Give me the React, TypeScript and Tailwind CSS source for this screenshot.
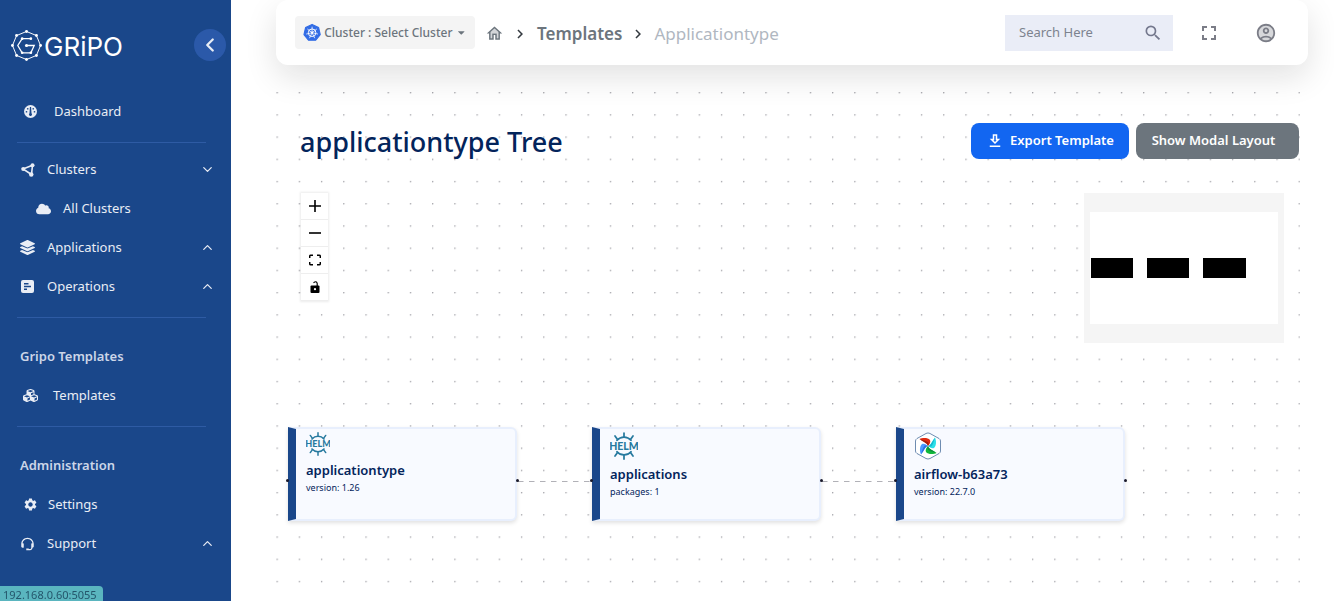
import type { ReactNode } from "react";
import { FaCloud, FaCubes, FaLayerGroup, FaCaretDown } from "react-icons/fa";
import { MdChevronRight, MdFullscreen, MdSearch, MdSettings } from "react-icons/md";
import { BiSupport } from "react-icons/bi";
import { ChevronDown, ChevronLeft, ChevronUp } from "lucide-react";

const polar = (cx: number, cy: number, r: number, deg: number) => {
  const a = (deg * Math.PI) / 180;
  return [cx + r * Math.sin(a), cy - r * Math.cos(a)] as const;
};

const ring = (n: number) => Array.from({ length: n }, (_, i) => (i * 360) / n);

function LogoMark() {
  const outer = ring(8).map((d) => polar(16, 16, 14.5, d));
  return (
    <svg width="31" height="33" viewBox="0 0 32 32" fill="none" stroke="white" aria-hidden="true">
      <polygon points={outer.map((p) => p.join(",")).join(" ")} strokeWidth="1" />
      {outer.map(([x, y], i) => (
        <circle key={i} cx={x} cy={y} r="1.5" fill="white" stroke="none" />
      ))}
      <path d="M20.500 9h-9L7 16l4.500 7.500h9l3.500-7.500h-8" strokeWidth="1.300" />
      <g fill="white" stroke="none">
        <circle cx="11.500" cy="9" r="1.400" />
        <circle cx="20.500" cy="9" r="1.400" />
        <circle cx="11.500" cy="23.500" r="1.400" />
        <circle cx="20.500" cy="23.500" r="1.400" />
        <circle cx="16" cy="16" r="1.600" />
      </g>
    </svg>
  );
}

function GaugeIcon() {
  return (
    <svg width="13" height="13" viewBox="0 0 26 26" aria-hidden="true">
      <circle cx="13" cy="13" r="13" fill="currentColor" />
      <g fill="#1a478a">
        <path d="M11.800 4h2.400l.8 12.500a3 3 0 1 1-4 0z" />
        <circle cx="7.500" cy="7.500" r="1.700" />
        <circle cx="18.500" cy="7.500" r="1.700" />
        <circle cx="5" cy="13.500" r="1.700" />
        <circle cx="21" cy="13.500" r="1.700" />
      </g>
    </svg>
  );
}

function NodesIcon() {
  return (
    <svg width="14" height="14" viewBox="0 0 28 28" aria-hidden="true">
      <path d="M4 12L23 4.500L21 23z" fill="none" stroke="currentColor" strokeWidth="3.200" />
      <circle cx="4.500" cy="12" r="4" fill="currentColor" />
      <circle cx="23" cy="4.500" r="4" fill="currentColor" />
      <circle cx="20.500" cy="23" r="4.500" fill="currentColor" />
    </svg>
  );
}

function BoardIcon() {
  return (
    <svg width="13" height="13" viewBox="0 0 26 26" aria-hidden="true">
      <rect width="26" height="26" rx="4" fill="currentColor" />
      <path d="M6 7.500h9M6 13h14M6 18.500h6" stroke="#1a478a" strokeWidth="2.800" />
    </svg>
  );
}

function KubernetesIcon() {
  const hept = ring(7).map((d) => polar(12, 12.3, 11, d).join(",")).join(" ");
  return (
    <svg width="19" height="19" viewBox="0 0 24 24" aria-hidden="true">
      <polygon points={hept} fill="#326ce5" stroke="#326ce5" strokeWidth="1.500" strokeLinejoin="round" />
      <g stroke="white" fill="none">
        <circle cx="12" cy="12.300" r="5" strokeWidth="1.300" />
        {ring(7).map((d) => {
          const [x, y] = polar(12, 12.3, 8, d);
          return <line key={d} x1="12" y1="12.300" x2={x} y2={y} strokeWidth="1" />;
        })}
      </g>
      <circle cx="12" cy="12.300" r="1.500" fill="white" />
    </svg>
  );
}

function HomeIcon() {
  return (
    <svg width="17" height="17" viewBox="1 2 22 20" fill="#6c757d" aria-hidden="true">
      <path opacity=".3" d="M7 10.190V18h2v-6h6v6h2v-7.810l-5-4.500z" />
      <path d="M12 3L2 12h3v8h6v-6h2v6h6v-8h3L12 3zm5 15h-2v-6H9v6H7v-7.810l5-4.500 5 4.500V18z" />
    </svg>
  );
}

function AccountIcon() {
  return (
    <svg width="22" height="22" viewBox="0 0 24 24" fill="#7b7d87" aria-hidden="true">
      <circle cx="12" cy="12" r="9" opacity=".3" />
      <path d="M12 2C6.480 2 2 6.480 2 12s4.480 10 10 10 10-4.480 10-10S17.520 2 12 2zM7.350 18.500C8.660 17.560 10.260 17 12 17s3.340.56 4.650 1.500c-1.310.94-2.910 1.500-4.650 1.500s-3.340-.56-4.650-1.500zm10.790-1.380C16.450 15.800 14.320 15 12 15s-4.450.8-6.140 2.120C4.700 15.730 4 13.950 4 12c0-4.420 3.580-8 8-8s8 3.580 8 8c0 1.950-.7 3.730-1.860 5.120zM12 6c-1.930 0-3.500 1.570-3.500 3.500S10.070 13 12 13s3.500-1.570 3.500-3.500S13.930 6 12 6zm0 5c-.83 0-1.500-.67-1.500-1.500S11.170 8 12 8s1.500.67 1.500 1.500S12.830 11 12 11z" />
    </svg>
  );
}

function DownloadIcon() {
  return (
    <svg width="18" height="18" viewBox="0 0 24 24" aria-hidden="true">
      <path
        fill="currentColor"
        d="M19 9h-4V3H9v6H5l7 7 7-7zm-8 2V5h2v6h1.170L12 13.170 9.830 11H11zm-6 7h14v2H5z"
      />
    </svg>
  );
}

function HelmIcon({ size }: { size: number }) {
  return (
    <svg width={size} height={size} viewBox="0 0 56 56" fill="none" stroke="#277a9f" strokeWidth="3.500" strokeLinecap="round" aria-hidden="true">
      <path d="M14 16.500a18.500 18.500 0 0 1 28 0M14 39.500a18.500 18.500 0 0 0 28 0" />
      <path d="M28 10V2M15 15L10 8M41 15l5-7M28 46v8M15 41l-5 7M41 41l5 7" />
      <text
        x="28"
        y="35"
        textAnchor="middle"
        fontFamily="Lato, sans-serif"
        fontWeight="900"
        fontSize="21"
        fill="#277a9f"
        stroke="none"
      >
        HELM
      </text>
    </svg>
  );
}

function AirflowIcon() {
  const blade = "M28 28C27 23 21 21 11 14C17 11 28 11 32 16C34 20 31 25 28 28z";
  const fold = "M28 28C27 23 21 21 11 14C17 16 27 18 29 22C29.500 24 29 26 28 28z";
  return (
    <svg width="28" height="28" viewBox="0 0 56 56" aria-hidden="true">
      <path d="M28 2Q30 2 32 3L50 13Q53 15 53 18V38Q53 41 50 43L32 53Q28 55 24 53L6 43Q3 41 3 38V18Q3 15 6 13L24 3Q26 2 28 2z" fill="white" stroke="#5d7fa8" strokeWidth="1.800" />
      <path d={blade} fill="#e0290f" />
      <path d={blade} fill="#2be0e8" transform="rotate(90 28 28)" />
      <path d={blade} fill="#10b83c" transform="rotate(180 28 28)" />
      <path d={blade} fill="#4b9bff" transform="rotate(270 28 28)" />
      <path d={fold} fill="#a3200f" />
      <path d={fold} fill="#16b9cf" transform="rotate(90 28 28)" />
      <path d={fold} fill="#0b8f3c" transform="rotate(180 28 28)" />
      <path d={fold} fill="#2f6fe0" transform="rotate(270 28 28)" />
    </svg>
  );
}

function Divider() {
  return <hr className="mt-[11px] mr-[25px] mb-[7px] ml-[17px] border-[#2e5ba4]" />;
}

function NavRow({
  icon,
  label,
  pad = "pl-5",
  gap = "gap-3",
  chevron,
}: {
  icon: ReactNode;
  label: string;
  pad?: string;
  gap?: string;
  chevron?: "up" | "down";
}) {
  return (
    <a href="#" className={`flex h-[39px] items-center pr-4 text-[13px] text-[#e9edf5] ${pad} ${gap}`}>
      <span className="flex w-[15px] shrink-0 justify-center">{icon}</span>
      <span className="flex-1">{label}</span>
      {chevron === "down" && <ChevronDown size={15} />}
      {chevron === "up" && <ChevronUp size={15} />}
    </a>
  );
}

function SectionTitle({ children }: { children: ReactNode }) {
  return (
    <h2 className="mt-[19px] flex h-[39px] items-center pl-5 text-[13px] font-semibold text-[#ccd6e8]">{children}</h2>
  );
}

function Sidebar() {
  return (
    <aside className="flex w-[231px] shrink-0 flex-col bg-[#1a478a]">
      <div className="flex h-[92px] items-center pr-[5px] pb-0.5 pl-[11px]">
        <LogoMark />
        <span className="ml-0.5 flex-1 pt-0.5 font-['Inter'] text-[26px] font-normal text-white">GRiPO</span>
        <button
          type="button"
          aria-label="Collapse sidebar"
          className="flex size-8 items-center justify-center rounded-full bg-[#2b59a9] text-[#e9edf5]"
        >
          <ChevronLeft size={22} strokeWidth={2.5} />
        </button>
      </div>
      <nav>
        <NavRow icon={<GaugeIcon />} label="Dashboard" pad="pl-[23px]" gap="gap-4" />
        <Divider />
        <NavRow icon={<NodesIcon />} label="Clusters" chevron="down" />
        <NavRow icon={<FaCloud size={16} />} label="All Clusters" pad="pl-9" />
        <NavRow icon={<FaLayerGroup size={15} />} label="Applications" chevron="up" />
        <NavRow icon={<BoardIcon />} label="Operations" chevron="up" />
        <Divider />
        <SectionTitle>Gripo Templates</SectionTitle>
        <NavRow icon={<FaCubes size={15} />} label="Templates" pad="pl-[23px]" gap="gap-[15px]" />
        <Divider />
        <SectionTitle>Administration</SectionTitle>
        <NavRow icon={<MdSettings size={15} />} label="Settings" pad="pl-[23px]" gap="gap-2.5" />
        <NavRow icon={<BiSupport size={16} />} label="Support" chevron="up" />
      </nav>
    </aside>
  );
}

function Header() {
  return (
    <header className="relative z-10 flex h-[65px] items-center rounded-xl bg-white pr-[31px] pl-[19px] text-[#6c757d] shadow-[0_12px_32px_rgba(18,18,18,0.12)]">
      <button
        type="button"
        className="flex h-[33px] w-[180px] items-center rounded bg-[#f4f4f4] px-2 text-xs font-medium whitespace-nowrap"
      >
        <KubernetesIcon />
        <span className="mr-1 ml-[3px]">Cluster : Select Cluster</span>
        <FaCaretDown size={11} />
      </button>
      <nav aria-label="Breadcrumb" className="ml-[11px] flex items-center pt-0.5">
        <a href="#" aria-label="Home">
          <HomeIcon />
        </a>
        <MdChevronRight size={18} className="mx-2 text-[#343a40]" />
        <a href="#" className="text-[17px] font-semibold">
          Templates
        </a>
        <MdChevronRight size={18} className="mx-[7px] text-[#343a40]" />
        <span className="text-[17px] text-[#b0b7c1]">Applicationtype</span>
      </nav>
      <label className="ml-auto flex h-9 w-[168px] items-center bg-[#eaedf7] pr-2.5 pl-3.5 text-[#74788d]">
        <input
          type="text"
          aria-label="Search"
          placeholder="Search Here"
          className="w-full min-w-0 flex-1 bg-transparent text-[13px] outline-none placeholder:text-[#7d838f]"
        />
        <MdSearch size={20} />
      </label>
      <button type="button" aria-label="Full screen" className="ml-[24px] text-[#7b7d87]">
        <MdFullscreen size={24} />
      </button>
      <button type="button" aria-label="Account" className="ml-[34px]">
        <AccountIcon />
      </button>
    </header>
  );
}

function DotGrid() {
  return (
    <svg className="absolute inset-0 size-full" aria-hidden="true">
      <defs>
        <pattern id="dots" width="22.220" height="22.220" patternUnits="userSpaceOnUse" x="0.500" y="7">
          <circle cx="0.700" cy="0.700" r="0.700" fill="#8f8f96" />
        </pattern>
      </defs>
      <rect width="100%" height="100%" fill="url(#dots)" />
    </svg>
  );
}

const controls: { label: string; icon: ReactNode }[] = [
  { label: "Zoom in", icon: <path d="M6 0v12M0 6h12" strokeWidth="1.600" /> },
  { label: "Zoom out", icon: <path d="M0 6h12" strokeWidth="1.600" /> },
  {
    label: "Fit view",
    icon: <path d="M.7 4V2.200Q.7 1.200 1.700 1.200H4M8 1.200h2.300q1 0 1 1V4M11.300 8v1.800q0 1-1 1H8M4 10.800H1.700q-1 0-1-1V8" strokeWidth="1.500" />,
  },
  {
    label: "Lock",
    icon: (
      <>
        <path d="M4.500 1.700Q7.700-.5 8.200 2.500V5" strokeWidth="1.200" />
        <rect x="1.500" y="4.500" width="9" height="7.500" rx="1" fill="black" stroke="none" />
        <circle cx="6" cy="8.200" r="1.100" fill="white" stroke="none" />
      </>
    ),
  },
];

function Controls() {
  return (
    <div className="flex w-[27px] flex-col bg-white shadow-[0_0_2px_1px_rgba(0,0,0,0.08)]">
      {controls.map((c) => (
        <button
          key={c.label}
          type="button"
          aria-label={c.label}
          className="flex h-[27px] items-center justify-center border-b border-[#eeeeee]"
        >
          <svg width="12" height="12" viewBox="0 0 12 12" fill="none" stroke="black">
            {c.icon}
          </svg>
        </button>
      ))}
    </div>
  );
}

function MiniMap() {
  return (
    <svg width="200" height="150" role="img" aria-label="Mini map">
      <rect width="200" height="150" fill="#f5f5f5" />
      <rect x="6" y="19" width="188" height="112" fill="white" />
      <rect x="7" y="65" width="42" height="20" />
      <rect x="63" y="65" width="42" height="20" />
      <rect x="119" y="65" width="43" height="20" />
    </svg>
  );
}

function TreeNode({
  place,
  icon,
  title,
  detail,
}: {
  place: string;
  icon: ReactNode;
  title: string;
  detail: string;
}) {
  return (
    <article
      className={`absolute top-[342px] h-[94px] w-[229px] rounded-r-md border-2 border-l-8 border-[#e8effd] border-l-[#1a478a] bg-[#f8faff] pt-[3px] pl-2.5 text-[#03245b] shadow-[0_2px_4px_rgba(0,0,0,0.12)] ${place}`}
    >
      {icon}
      <h3 className="mt-[5px] text-[13px] leading-[18px] font-semibold">{title}</h3>
      <p className="mt-px text-[9px] leading-4">{detail}</p>
      <span className="absolute top-[50px] -left-[10px] size-[3px] rounded-full bg-[#1a192b]" />
      <span className="absolute top-[50px] -right-[4px] size-[3px] rounded-full bg-[#1a192b]" />
    </article>
  );
}

function Canvas() {
  return (
    <section className="relative mt-5 mr-2 flex flex-1 flex-col">
      <DotGrid />
      <div className="relative mt-[38px] flex h-9 items-center gap-[7px] pr-px pl-6">
        <h1 className="mr-auto pt-0.5 text-[27px] font-medium text-[#03245b]">applicationtype Tree</h1>
        <button
          type="button"
          className="flex h-9 w-[158px] items-center justify-center gap-1.5 rounded-lg bg-[#1266f1] text-[13px] font-semibold text-white"
        >
          <DownloadIcon />
          Export Template
        </button>
        <button
          type="button"
          className="h-9 w-[163px] rounded-lg bg-[#6c757d] pr-2 text-[13px] font-semibold text-white"
        >
          Show Modal Layout
        </button>
      </div>
      <div className="relative mt-[34px] flex items-start justify-between pr-4 pl-[25px]">
        <Controls />
        <MiniMap />
      </div>
      <svg className="absolute inset-0 size-full" aria-hidden="true">
        <path d="M242 396.500H316M546 396.500H620" stroke="#b1b1b7" strokeWidth="1.100" strokeDasharray="5.500" />
      </svg>
      <TreeNode place="left-3" icon={<HelmIcon size={24} />} title="applicationtype" detail="version: 1.26" />
      <TreeNode place="left-[316px]" icon={<HelmIcon size={28} />} title="applications" detail="packages: 1" />
      <TreeNode place="left-[620px]" icon={<AirflowIcon />} title="airflow-b63a73" detail="version: 22.7.0" />
    </section>
  );
}

export default function App() {
  return (
    <div className="flex min-h-screen bg-white font-['Noto_Sans','Open_Sans',sans-serif]">
      <Sidebar />
      <main className="flex min-w-0 flex-1 flex-col overflow-hidden pr-[26px] pl-[45px]">
        <Header />
        <Canvas />
      </main>
      <div className="fixed bottom-0 left-0 rounded-tr-sm bg-[#5ab5bf] pt-0.5 pr-1.5 pl-[3px] text-[11px] leading-[13px] text-[#24566b]">
        192.168.0.60:5055
      </div>
    </div>
  );
}
